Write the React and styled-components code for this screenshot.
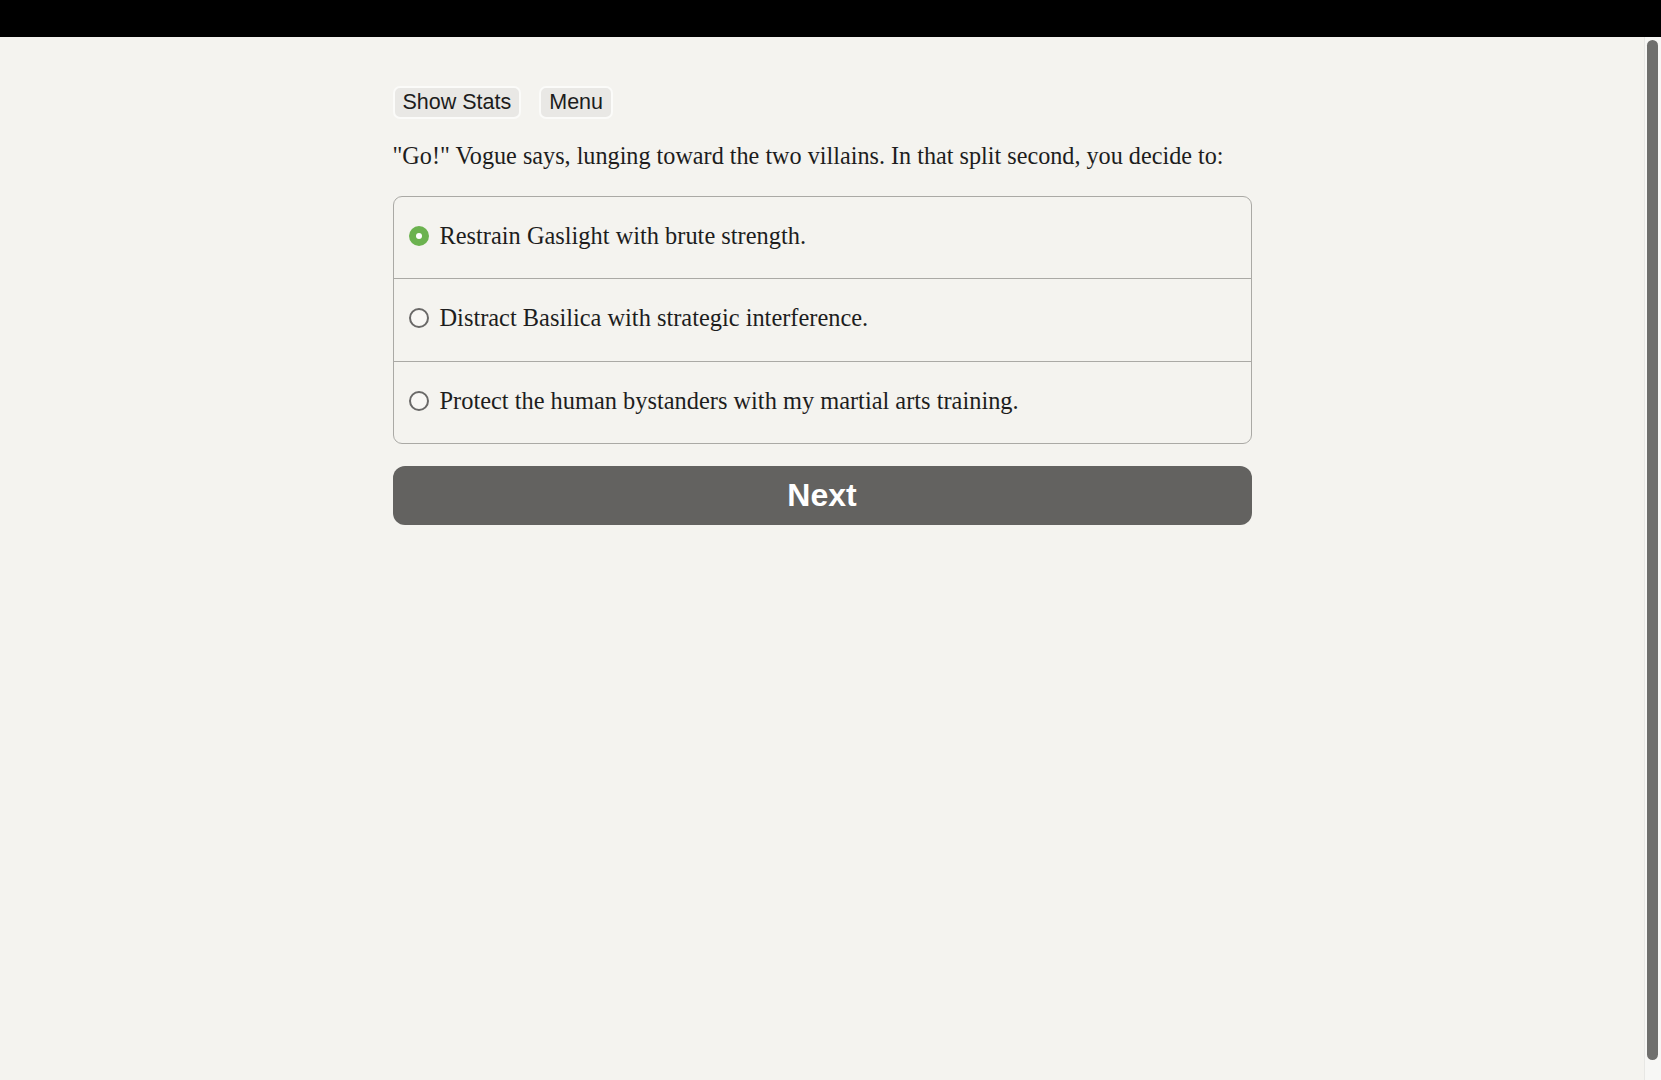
import React, { useState } from "react";
import styled, { createGlobalStyle } from "styled-components";

const Global = createGlobalStyle`
  html, body { margin: 0; padding: 0; height: 100%; }
  body { background: #f4f3ef; overflow: hidden; }
  #root { height: 100%; }
`;

const Frame = styled.div`
  display: flex;
  flex-direction: column;
  height: 1080px;
  background: #f4f3ef;
`;

const TopBar = styled.div`
  height: 37px;
  flex: none;
  background: #000;
`;

const Body = styled.div`
  flex: 1;
  display: flex;
  min-height: 0;
`;

const Main = styled.main`
  flex: 1;
  display: flex;
  justify-content: center;
  padding-top: 49px;
`;

const Column = styled.div`
  width: 859px;
  display: flex;
  flex-direction: column;
`;

const Toolbar = styled.div`
  display: flex;
  gap: 18px;
`;

const ToolButton = styled.button`
  font-family: "Liberation Sans", Arial, sans-serif;
  font-size: 21.5px;
  color: #1c1c1c;
  background: #e9e8e5;
  border: 2px solid #fbfbf9;
  border-radius: 7px;
  height: 33px;
  padding: 0 8px;
  margin: 0;
  line-height: 1;
  cursor: pointer;
`;

const Prompt = styled.p`
  font-family: "Liberation Serif", "Times New Roman", serif;
  font-size: 24.2px;
  color: #1d1d1d;
  margin: 22px 0 0 0;
  line-height: 30px;
`;

const Options = styled.div`
  margin-top: 25px;
  border: 1.5px solid #aaa9a5;
  border-radius: 9px;
  display: flex;
  flex-direction: column;
  overflow: hidden;
`;

const Option = styled.label`
  height: 81px;
  display: flex;
  align-items: center;
  gap: 11px;
  padding: 0 15px 3px;
  box-sizing: border-box;
  cursor: pointer;
  & + & {
    height: 82.5px;
    border-top: 1.5px solid #aaa9a5;
  }
`;

const Radio = styled.span`
  width: 20px;
  height: 20px;
  box-sizing: border-box;
  border-radius: 50%;
  flex: none;
  display: flex;
  align-items: center;
  justify-content: center;
  background: ${(p) => (p.$checked ? "#6bb24f" : "#f8f7f4")};
  border: ${(p) => (p.$checked ? "none" : "2.6px solid #6a6968")};
  &::after {
    content: "";
    display: ${(p) => (p.$checked ? "block" : "none")};
    width: 6px;
    height: 6px;
    border-radius: 50%;
    background: #fff;
  }
`;

const OptionText = styled.span`
  font-family: "Liberation Serif", "Times New Roman", serif;
  font-size: 24.4px;
  color: #1d1d1d;
`;

const NextButton = styled.button`
  margin-top: 22px;
  height: 59px;
  border: none;
  border-radius: 12px;
  background: #636260;
  color: #fff;
  font-family: "Liberation Sans", Arial, sans-serif;
  font-weight: 700;
  font-size: 32px;
  cursor: pointer;
`;

const ScrollTrack = styled.aside`
  width: 17px;
  flex: none;
  background: #f7f7f5;
  border-left: 1px solid #e7e7e4;
  padding: 3px 3px 20px 2px;
  box-sizing: border-box;
  display: flex;
`;

const Thumb = styled.div`
  flex: 1;
  border-radius: 6px;
  background: #6f6f6d;
`;

const choices = [
  "Restrain Gaslight with brute strength.",
  "Distract Basilica with strategic interference.",
  "Protect the human bystanders with my martial arts training.",
];

export default function App() {
  const [selected, setSelected] = useState(0);
  return (
    <Frame>
      <Global />
      <TopBar />
      <Body>
        <Main>
          <Column>
            <Toolbar>
              <ToolButton>Show Stats</ToolButton>
              <ToolButton>Menu</ToolButton>
            </Toolbar>
            <Prompt>
              "Go!" Vogue says, lunging toward the two villains. In that split second, you decide to:
            </Prompt>
            <Options>
              {choices.map((c, i) => (
                <Option key={i} onClick={() => setSelected(i)}>
                  <Radio $checked={selected === i} />
                  <OptionText>{c}</OptionText>
                </Option>
              ))}
            </Options>
            <NextButton>Next</NextButton>
          </Column>
        </Main>
        <ScrollTrack>
          <Thumb />
        </ScrollTrack>
      </Body>
    </Frame>
  );
}
